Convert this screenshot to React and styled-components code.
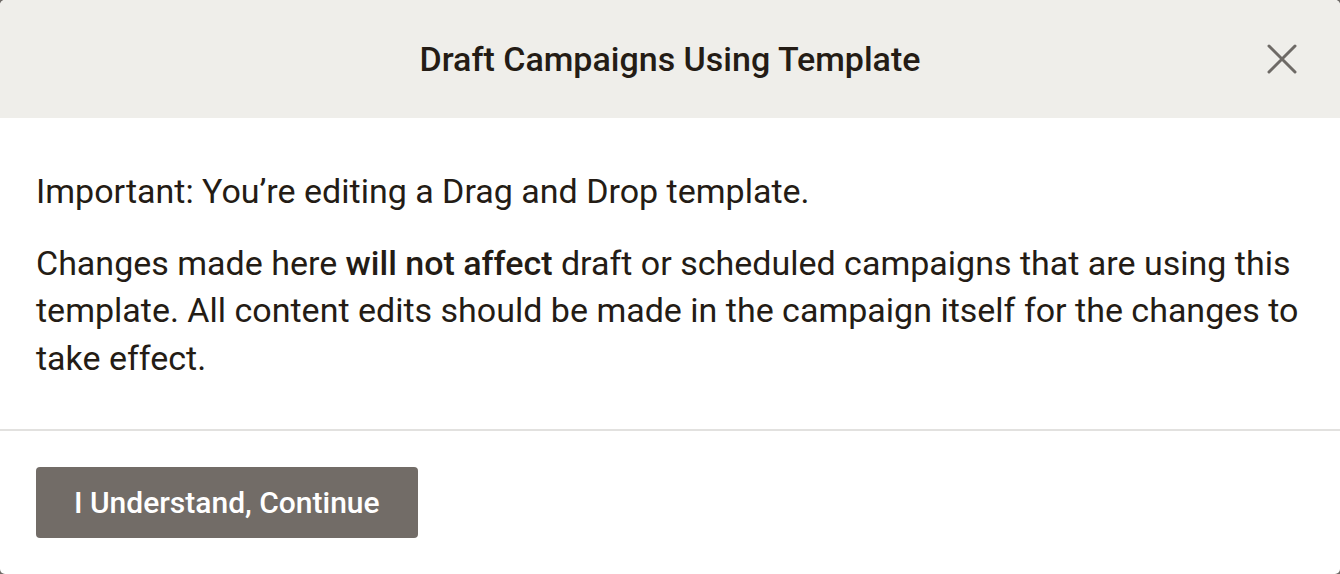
import React from "react";
import styled, { createGlobalStyle } from "styled-components";

const Global = createGlobalStyle`
  html, body { margin: 0; padding: 0; background: #6e6a66; }
  body { font-family: Roboto, "Helvetica Neue", Arial, sans-serif; -webkit-font-smoothing: antialiased; }
  * { box-sizing: border-box; }
`;

const Modal = styled.div`
  width: 1340px;
  height: 574px;
  background: #ffffff;
  border-radius: 5px;
  overflow: hidden;
  display: flex;
  flex-direction: column;
  color: #241c15;
`;

const Header = styled.header`
  height: 118px;
  flex: none;
  background: #efeeea;
  display: flex;
  align-items: center;
  justify-content: center;
  position: relative;
`;

const Title = styled.h1`
  margin: 0;
  font-size: 34px;
  font-weight: 500;
  color: #241c15;
  letter-spacing: 0;
`;

const Close = styled.button`
  position: absolute;
  right: 38px;
  top: 39px;
  width: 40px;
  height: 40px;
  border: 0;
  background: transparent;
  padding: 0;
  display: flex;
  align-items: center;
  justify-content: center;
  cursor: pointer;
`;

const Body = styled.section`
  padding: 50px 36px 47px;
  border-bottom: 2px solid #e2e1df;
`;

const Para = styled.p`
  margin: 0;
  font-size: 34px;
  line-height: 47.5px;
  font-weight: 400;
  & + & { margin-top: 24px; }
  strong { font-weight: 500; }
`;

const Footer = styled.footer`
  padding: 36px 36px;
`;

const Primary = styled.button`
  height: 71px;
  padding: 0 38px;
  border: 0;
  border-radius: 4px;
  background: #726c67;
  color: #ffffff;
  font-family: inherit;
  font-size: 30px;
  font-weight: 500;
  cursor: pointer;
`;

export default function App() {
  return (
    <>
      <Global />
      <Modal>
        <Header>
          <Title>Draft Campaigns Using Template</Title>
          <Close aria-label="Close">
            <svg width="32" height="32" viewBox="0 0 32 32">
              <path d="M3 3 L29 29 M29 3 L3 29" stroke="#6e6a66" strokeWidth="3" strokeLinecap="round" />
            </svg>
          </Close>
        </Header>
        <Body>
          <Para>Important: You’re editing a Drag and Drop template.</Para>
          <Para>
            Changes made here <strong>will not affect</strong> draft or scheduled campaigns that are using this
            template. All content edits should be made in the campaign itself for the changes to take effect.
          </Para>
        </Body>
        <Footer>
          <Primary>I Understand, Continue</Primary>
        </Footer>
      </Modal>
    </>
  );
}
